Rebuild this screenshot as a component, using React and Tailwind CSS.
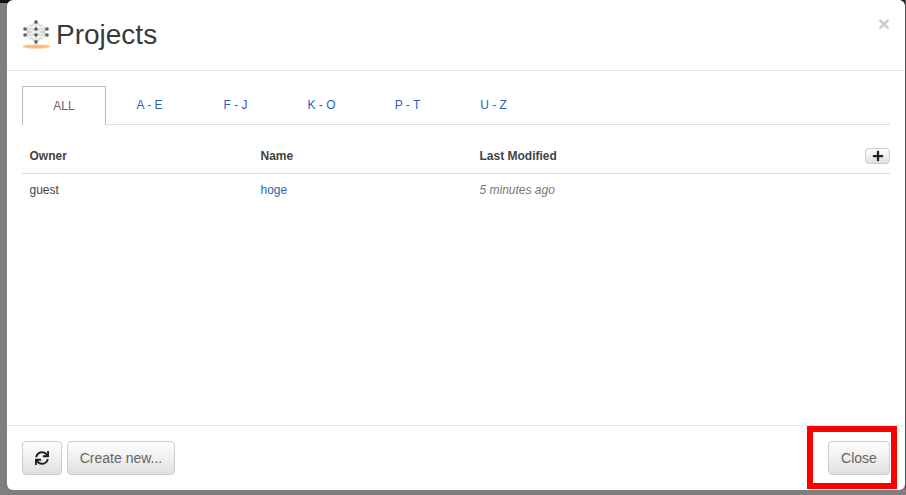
import React from "react";
import { FaSync, FaPlus } from "react-icons/fa";

const tabs = ["A - E", "F - J", "K - O", "P - T", "U - Z"];

const Logo = () => (
  <svg width="30" height="32" viewBox="0 0 30 32" className="shrink-0">
    <ellipse cx="14.5" cy="27.5" rx="14" ry="2" fill="#fbbf7c" />
    <g stroke="#bdbdbd" strokeWidth="0.8" fill="none">
      <path d="M3 10L14 3M3 10L14 10M3 10L14 16M3 16L14 3M3 16L14 10M3 16L14 16M14 3L25 10M14 3L25 16M14 10L25 10M14 10L25 16M14 16L25 10M14 16L25 16M3 10L14 23M3 16L14 23M25 10L14 23M25 16L14 23M14 3V23" />
    </g>
    <g fill="#5c5c5c">
      <circle cx="14" cy="3" r="1.8" />
      <circle cx="3" cy="10" r="1.8" />
      <circle cx="14" cy="10" r="1.8" />
      <circle cx="25" cy="10" r="1.8" />
      <circle cx="3" cy="16" r="1.8" />
      <circle cx="14" cy="16" r="1.8" />
      <circle cx="25" cy="16" r="1.8" />
      <circle cx="14" cy="23" r="1.8" />
    </g>
  </svg>
);

const btn =
  "flex items-center justify-center rounded border border-[#ccc] bg-gradient-to-b from-white to-[#e0e0e0] text-[#444]";

export default function App() {
  return (
    <div className="relative h-[495px] w-[906px] overflow-hidden bg-[#7f7f7f] pl-[7px] pr-px pb-[5px] font-['Liberation_Sans',Arial,sans-serif] text-xs text-[#444]">
      {/* dark backdrop bits showing behind the modal corners */}
      <div className="absolute left-0 top-0 h-[3px] w-[14px] bg-[#111]" />
      <div className="absolute right-0 top-0 h-[8px] w-[5px] bg-[#222]" />
      <div className="absolute bottom-[5px] right-0 top-0 w-px bg-[#555]" />

      <div className="relative flex h-full flex-col rounded-md bg-white">
        <div className="relative flex h-[71px] items-center gap-1 border-b border-[#e5e5e5] pl-[15px]">
          <Logo />
          <h4 className="text-[28px] leading-none text-[#3a3a3a]">Projects</h4>
          <span className="absolute right-[15px] top-[13px] text-[21px] font-bold leading-none text-[#cdcdcd]">×</span>
        </div>

        <div className="flex-1 px-[15px] pt-[15px]">
          <div className="flex h-[39px] border-b border-[#ddd]">
            <div className="flex h-[39px] w-[84px] items-center justify-center border border-b-0 border-[#bbb] bg-white text-[#666]">ALL</div>
            {tabs.map((t) => (
              <div key={t} className="flex h-[38px] w-[86px] items-center justify-center pl-px text-[#2f5fb3]">{t}</div>
            ))}
          </div>

          <div className="flex h-[49px] items-center border-b border-[#ddd] pl-[7.5px] pt-[14px] font-bold">
            <div className="w-[231px]">Owner</div>
            <div className="w-[219px]">Name</div>
            <div className="flex-1">Last Modified</div>
            <button className={`${btn} h-[16px] w-[25px] font-normal`}>
              <FaPlus className="text-[12px] text-[#222]" />
            </button>
          </div>

          <div className="flex h-[32px] items-center pl-[7.5px]">
            <div className="w-[231px]">guest</div>
            <div className="w-[219px] text-[#2f5fb3]">hoge</div>
            <div className="italic text-[#777]">5 minutes ago</div>
          </div>
        </div>

        <div className="flex h-[65px] items-center justify-between border-t border-[#e5e5e5] px-[15px]">
          <div className="flex gap-[5px]">
            <button className={`${btn} h-[34px] w-[40px]`}>
              <FaSync className="text-[14px] text-[#222]" />
            </button>
            <button className={`${btn} h-[34px] w-[108px] text-sm text-[#666]`}>Create new...</button>
          </div>
          <button className={`${btn} h-[34px] w-[62px] text-sm text-[#666]`}>Close</button>
        </div>
      </div>

      <div className="absolute left-[807px] top-[426px] h-[63px] w-[90px] border-[6px] border-[#ff0000]" />
    </div>
  );
}
